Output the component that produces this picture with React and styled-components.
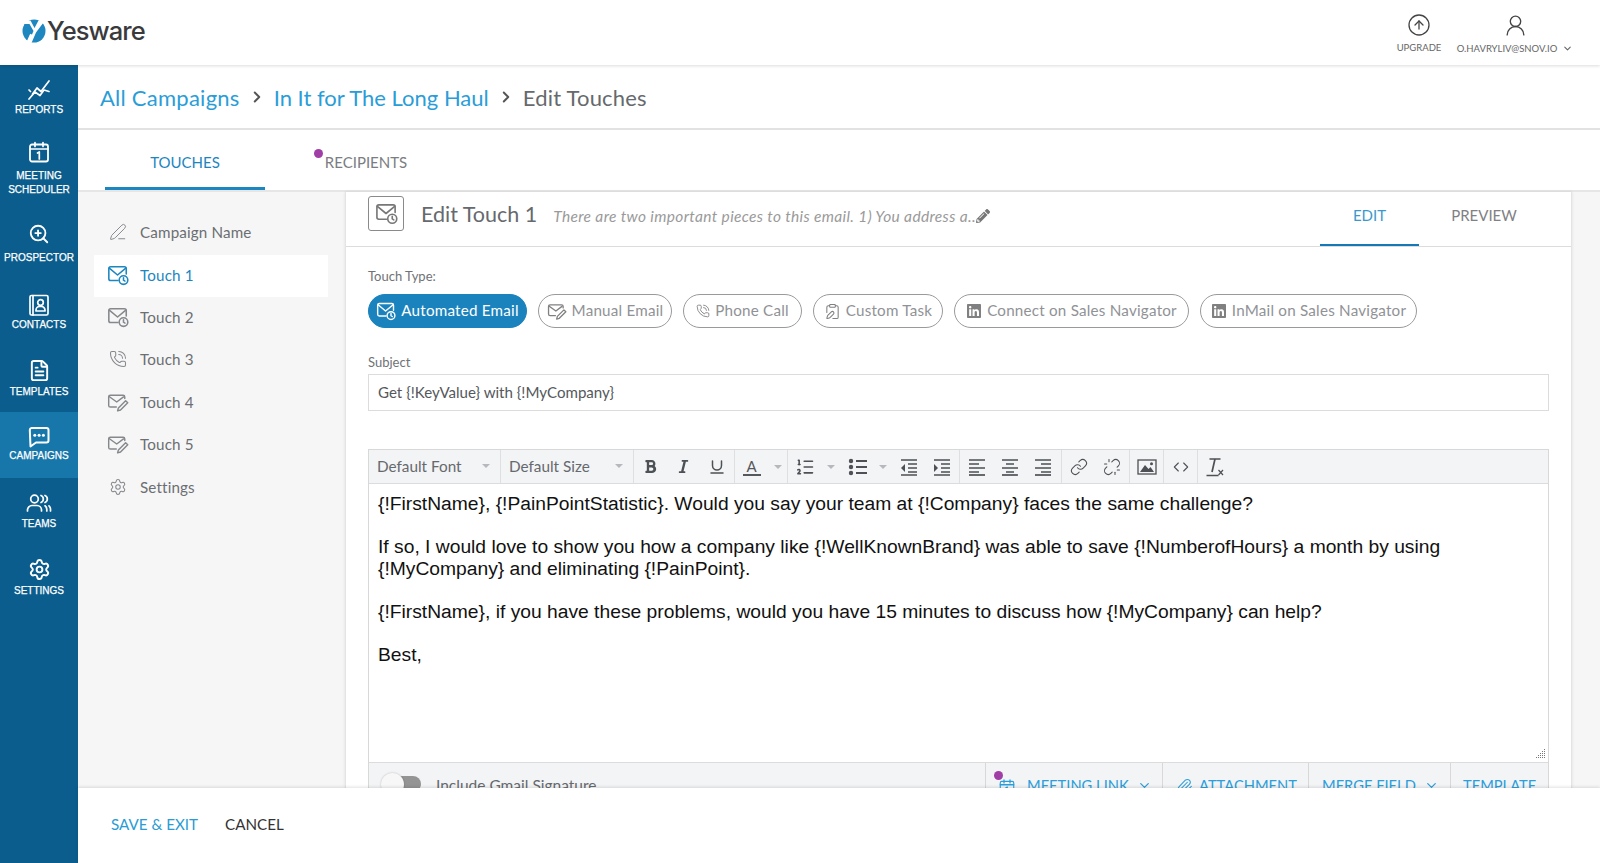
import React from "react"
import styled, { createGlobalStyle } from "styled-components"
import {
  ChevronRight,
  ChevronDown,
  CircleArrowUp,
  UserRound,
  ZoomIn,
  FileText,
  Settings,
  PenLine,
  PhoneCall,
  ClipboardPen,
  Underline,
  ListOrdered,
  Link,
  Unlink,
  Code,
  Paperclip,
} from "lucide-react"
import { FaLinkedin, FaPencilAlt, FaBold, FaItalic } from "react-icons/fa"

const GlobalStyle = createGlobalStyle`
  html, body { margin: 0; padding: 0; background: #fff; }
  * { box-sizing: border-box; }
  body { font-family: Lato, "Open Sans", sans-serif; color: #5f6368; }
`

const Page = styled.div`
  width: 100%;
  height: 100vh;
  display: flex;
  flex-direction: column;
  overflow: hidden;
`

const TopBar = styled.header`
  height: 65px;
  flex: none;
  display: flex;
  align-items: flex-start;
  justify-content: space-between;
  background: #fff;
  box-shadow: 0 1px 3px rgba(0, 0, 0, 0.14);
  position: relative;
  z-index: 3;
`

const Logo = styled.div`
  display: flex;
  align-items: center;
  gap: 1px;
  padding: 15px 0 0 22px;
`

const LogoWord = styled.span`
  font-family: Inter, sans-serif;
  font-size: 25.5px;
  font-weight: 500;
  letter-spacing: -0.9px;
  color: #3a3a3c;
`

const TopActions = styled.div`
  display: flex;
  gap: 6px;
  padding: 13px 25px 0 0;
`

const TopAction = styled.div`
  display: flex;
  flex-direction: column;
  align-items: center;
  width: ${(p) => p.$w}px;
  color: #444;
`

const TopLabel = styled.span`
  display: flex;
  align-items: center;
  gap: 5px;
  margin-top: 5px;
  font-size: 9.5px;
  color: #666;
  white-space: nowrap;
`

const Body = styled.div`
  flex: 1;
  min-height: 0;
  display: flex;
`

const Sidebar = styled.nav`
  width: 78px;
  flex: none;
  background: #0b5d8d;
`

const SideItem = styled.div`
  height: ${(p) => p.$h}px;
  padding-top: 13px;
  display: flex;
  flex-direction: column;
  align-items: center;
  background: ${(p) => (p.$active ? "#1776aa" : "transparent")};
  color: #fff;
`

const SideLabel = styled.span`
  margin-top: ${(p) => p.$gap ?? 5}px;
  font-family: "Liberation Sans", Arial, sans-serif;
  font-size: 10px;
  line-height: 14px;
  text-align: center;
  font-weight: 400;
  -webkit-text-stroke: 0.25px #fff;
  white-space: nowrap;
`

const Content = styled.div`
  flex: 1;
  min-width: 0;
  display: flex;
  flex-direction: column;
`

const Crumbs = styled.div`
  height: 65px;
  flex: none;
  display: flex;
  align-items: center;
  padding: 1px 0 0 22px;
  border-bottom: 2px solid #e2e2e2;
  font-size: 22px;
`

const Crumb = styled.span`
  letter-spacing: ${(p) => p.$spacing ?? 0}px;
  color: ${(p) => (p.$current ? "#66696d" : "#2a9dd8")};
`

const CrumbSep = styled(ChevronRight)`
  width: 18px;
  height: 18px;
  margin: 0 8px;
  color: #555;
  stroke-width: 2.6;
`

const Tabs = styled.div`
  height: 62px;
  flex: none;
  display: flex;
  padding-left: 27px;
  border-bottom: 2px solid #e6e6e6;
`

const Tab = styled.div`
  position: relative;
  width: ${(p) => p.$w}px;
  display: flex;
  align-items: center;
  justify-content: center;
  padding-top: 7px;
  font-size: 15px;
  color: ${(p) => (p.$active ? "#1c86c0" : "#7a7d81")};
  border-bottom: 3px solid ${(p) => (p.$active ? "#1c86c0" : "transparent")};
`

const Dot = styled.span`
  position: absolute;
  width: 9px;
  height: 9px;
  border-radius: 50%;
  background: #a03ea6;
  left: ${(p) => p.$x}px;
  top: ${(p) => p.$y}px;
`

const Workspace = styled.div`
  flex: 1;
  min-height: 0;
  display: flex;
  background: #f6f6f6;
`

const TouchNav = styled.div`
  width: 267px;
  flex: none;
  padding: 20.5px 0 0 16px;
`

const TouchItem = styled.div`
  width: 234px;
  height: 42.4px;
  display: flex;
  align-items: center;
  gap: 11px;
  padding: 0 0 3px 13px;
  font-size: 15.2px;
  letter-spacing: 0.15px;
  background: ${(p) => (p.$active ? "#fff" : "transparent")};
  color: ${(p) => (p.$active ? "#1c86c0" : "#6b6e72")};
`

const TouchIcon = styled.span`
  width: 22px;
  display: flex;
  justify-content: center;
  color: ${(p) => (p.$active ? "#1c86c0" : "#85888c")};
`

const Panel = styled.main`
  width: 1227px;
  flex: none;
  background: #fff;
  border-left: 1px solid #e4e4e4;
  border-right: 1px solid #e4e4e4;
  box-shadow: 0 0 3px rgba(0, 0, 0, 0.1);
  overflow: hidden;
`

const PanelHead = styled.div`
  height: 55px;
  display: flex;
  border-bottom: 1px solid #dcdcdc;
  padding: 0 22px;
`

const TouchBox = styled.div`
  width: 36px;
  height: 35px;
  margin-top: 4px;
  display: flex;
  align-items: center;
  justify-content: center;
  border: 1px solid #8a8a8a;
  border-radius: 3px;
  color: #777;
`

const TouchTitle = styled.h2`
  margin: 7px 0 0 17px;
  font-size: 21.5px;
  line-height: 30px;
  font-weight: 400;
  color: #66696d;
  white-space: nowrap;
`

const TouchNote = styled.div`
  display: flex;
  align-items: flex-start;
  margin: 14px 0 0 16px;
  font-size: 15.5px;
  letter-spacing: 0.35px;
  line-height: 20px;
  font-style: italic;
  color: #9a9a9a;
  white-space: nowrap;
  svg {
    margin-top: 3px;
    color: #777;
  }
`

const ViewTabs = styled.div`
  margin-left: auto;
  display: flex;
`

const ViewTab = styled.div`
  width: ${(p) => p.$w}px;
  display: flex;
  align-items: center;
  justify-content: center;
  padding-bottom: 7px;
  font-size: 15px;
  color: ${(p) => (p.$active ? "#3b98cc" : "#7f8185")};
  border-bottom: 2px solid ${(p) => (p.$active ? "#1579b8" : "transparent")};
`

const PanelBody = styled.div`
  padding: 21px 22px 0;
`

const FieldLabel = styled.div`
  font-size: 13px;
  line-height: 16px;
  color: #6f7276;
`

const Pills = styled.div`
  display: flex;
  gap: 11px;
  margin: 10px 0 26px;
`

const Pill = styled.div`
  height: 34px;
  width: ${(p) => p.$w}px;
  display: flex;
  align-items: center;
  justify-content: center;
  gap: 5px;
  padding-bottom: 2px;
  border-radius: 17px;
  font-size: 15.2px;
  letter-spacing: 0.22px;
  white-space: nowrap;
  color: ${(p) => (p.$active ? "#fff" : "#909296")};
  background: ${(p) => (p.$active ? "#1a82bd" : "#fff")};
  border: 1px solid ${(p) => (p.$active ? "#1a82bd" : "#9a9a9a")};
  svg {
    flex: none;
    margin-top: 2px;
    color: ${(p) => (p.$active ? "#fff" : "#808080")};
  }
`

const SubjectInput = styled.div`
  height: 37px;
  margin: 4px 0 38px;
  display: flex;
  align-items: center;
  padding: 0 0 2px 9px;
  border: 1px solid #dcdcdc;
  font-size: 15.1px;
  color: #55585c;
`

const Editor = styled.div`
  border: 1px solid #d8d8d8;
  border-bottom: 0;
`

const Toolbar = styled.div`
  height: 34px;
  display: flex;
  background: #f3f4f6;
  border-bottom: 1px solid #dcdcdc;
`

const ToolGroup = styled.div`
  width: ${(p) => p.$w}px;
  flex: ${(p) => (p.$w ? "none" : 1)};
  display: flex;
  align-items: center;
  border-right: ${(p) => (p.$last ? "none" : "1px solid #dedfe1")};
`

const ToolSelect = styled.div`
  flex: 1;
  display: flex;
  align-items: center;
  justify-content: space-between;
  padding: 0 10px 2px 8px;
  font-size: 15.3px;
  color: #66696d;
`

const Caret = styled.span`
  width: 0;
  height: 0;
  flex: none;
  border-left: 4px solid transparent;
  border-right: 4px solid transparent;
  border-top: 4px solid #b7b8bb;
`

const ToolCaretSlot = styled.span`
  width: ${(p) => p.$w ?? 20}px;
  display: flex;
  justify-content: center;
`

const ToolBtn = styled.span`
  width: ${(p) => p.$w ?? 33}px;
  flex: none;
  display: flex;
  justify-content: center;
  align-items: center;
  color: #4d5054;
`

const ColorA = styled.span`
  width: 18px;
  text-align: center;
  border-bottom: 2px solid #55585c;
  font-size: 15px;
  line-height: 16px;
  color: #55585c;
`

const EditorText = styled.div`
  height: 278px;
  position: relative;
  padding: 9px 9px 0;
  font-family: "Liberation Sans", Arial, sans-serif;
  font-size: 19.25px;
  line-height: 21.7px;
  color: #111;
  p {
    margin: 0 0 21.5px;
  }
`

const Resizer = styled.svg`
  position: absolute;
  right: 2px;
  bottom: 2px;
`

const EditorFoot = styled.div`
  height: 40px;
  display: flex;
  background: #f3f4f6;
  border-top: 1px solid #dcdcdc;
`

const SigToggle = styled.div`
  flex: 1;
  display: flex;
  align-items: flex-start;
  gap: 15px;
  padding: 10px 0 0 12px;
  font-size: 15.5px;
  line-height: 25px;
  color: #66696d;
`

const Switch = styled.div`
  position: relative;
  width: 40px;
  height: 16px;
  margin-top: 3px;
  &::before {
    content: "";
    position: absolute;
    left: 12px;
    right: 0;
    top: 0;
    bottom: 0;
    border-radius: 8px;
    background: #949494;
  }
  &::after {
    content: "";
    position: absolute;
    left: 0;
    top: -3px;
    width: 23px;
    height: 23px;
    border-radius: 50%;
    background: #f7f7f7;
    box-shadow: 0 0 2px rgba(0, 0, 0, 0.25);
  }
`

const FootAction = styled.div`
  position: relative;
  width: ${(p) => p.$w}px;
  flex: none;
  display: flex;
  align-items: flex-start;
  gap: ${(p) => p.$gap ?? 8}px;
  padding: 10px 0 0 ${(p) => p.$pad}px;
  font-size: 14.7px;
  line-height: 25px;
  color: #2a9fdc;
  border-left: 1px solid #d8d8d8;
  white-space: nowrap;
  svg {
    flex: none;
    margin-top: 5px;
  }
  svg:first-of-type {
    margin-right: 3px;
  }
`

const BottomBar = styled.footer`
  height: 75px;
  flex: none;
  display: flex;
  align-items: center;
  gap: 27px;
  padding: 0 0 4px 33px;
  background: #fff;
  box-shadow: 0 -1px 3px rgba(0, 0, 0, 0.12);
  position: relative;
  font-size: 15.2px;
`

const BottomLink = styled.span`
  color: ${(p) => (p.$primary ? "#2a9bd4" : "#333")};
`

const line = {
  fill: "none",
  stroke: "currentColor",
  strokeWidth: 1.7,
  strokeLinecap: "round",
  strokeLinejoin: "round",
}

const MailClock = ({ size = 22 }) => (
  <svg width={size} height={size} viewBox="0 0 24 24" {...line}>
    <path d="M12 18H4a2 2 0 0 1-2-2V5a2 2 0 0 1 2-2h15a2 2 0 0 1 2 2v6" />
    <path d="M2.5 4.5 11.5 12l9-7.5" />
    <circle cx="18" cy="17.5" r="4.7" />
    <path d="M18 15v2.6l1.6 1" />
  </svg>
)

const MailPencil = ({ size = 22 }) => (
  <svg width={size} height={size} viewBox="0 0 26 24" {...line}>
    <path d="M11 18H4a2 2 0 0 1-2-2V6a2 2 0 0 1 2-2h15a2 2 0 0 1 2 2v2" />
    <path d="M2.5 5.5 11.5 12l8-6" />
    <path d="M22 10.5l2.5 2.5-8.5 8.5-3.5 1 1-3.5z" />
  </svg>
)

const ChartIcon = () => (
  <svg width="24" height="24" viewBox="0 0 24 24" {...line}>
    <path d="M2 12l1.5 1.5M5.5 16l4.5-6 4 3.5L22 3" />
    <path d="M2 21l6-7 5 3.5 4-5.500 5 1.5" />
  </svg>
)

const CalendarIcon = ({ size = 24, stroke }) => (
  <svg width={size} height={size} viewBox="0 0 24 24" {...line}>
    <rect x="3" y="4.5" width="18" height="17" rx="2" strokeWidth={stroke ?? 1.8} />
    <path d="M3 9h18M8 2.5v4M16 2.5v4" />
    <path d="M10.5 13l1.8-1v7" />
  </svg>
)

const ContactIcon = () => (
  <svg width="24" height="24" viewBox="0 0 24 24" {...line}>
    <rect x="3" y="2.5" width="18" height="19.5" rx="1.5" />
    <path d="M6 2.5V22" />
    <circle cx="13.5" cy="9.5" r="2.8" />
    <path d="M9 18v-1a3.5 3.5 0 0 1 3.5-3.5h2A3.5 3.5 0 0 1 18 17v1z" />
  </svg>
)

const TeamIcon = () => (
  <svg width="26" height="24" viewBox="0 0 26 24" {...line}>
    <circle cx="8.5" cy="8" r="3.8" />
    <path d="M1.5 20v-1a4.5 4.5 0 0 1 4.5-4.5h5a4.5 4.5 0 0 1 4.5 4.5v1" />
    <path d="M15 4.5a3.8 3.8 0 0 1 0 7M19 4.5a3.8 3.8 0 0 1 0 7" />
    <path d="M19 14.8a4.5 4.5 0 0 1 1.8 3.7V20M23 14.8a4.5 4.5 0 0 1 1.5 3.7V20" />
  </svg>
)

const BubbleIcon = () => (
  <svg width="24" height="24" viewBox="0 0 24 24">
    <path
      d="M4.5 3h15A2 2 0 0 1 21.5 5v10.5a2 2 0 0 1-2 2H9L3.5 21.5 2.8 5A2 2 0 0 1 4.5 3z"
      fill="none"
      stroke="currentColor"
      strokeWidth="2"
      strokeLinejoin="round"
    />
    <circle cx="7.8" cy="10.3" r="1.5" fill="currentColor" />
    <circle cx="12.1" cy="10.3" r="1.5" fill="currentColor" />
    <circle cx="16.4" cy="10.3" r="1.5" fill="currentColor" />
  </svg>
)

const LogoMark = () => (
  <svg width="24" height="24" viewBox="0 0 24 24">
    <circle cx="12" cy="12" r="11.5" fill="#1f87bf" />
    <path d="M1 1.5h7.5L12.5 9l4-7.5H23L14 13.5 9.5 24H4l4.5-10z" fill="#fff" />
    <path d="M2.5 5h5l4 7-1.5 3.5C6 14.5 2.5 10 2.5 5z" fill="#1f87bf" />
  </svg>
)

const AlignIcon = ({ mode }) => {
  const short = { left: "M2 7h10M2 15h10", center: "M6 7h8M6 15h8", right: "M8 7h10M8 15h10" }
  return (
    <svg width="20" height="20" viewBox="0 0 20 20" fill="none" stroke="currentColor" strokeWidth="1.7">
      <path d="M2 3h16M2 11h16" />
      <path d={short[mode]} />
      <path d="M2 18h16" />
    </svg>
  )
}

const IndentIcon = ({ flip }) => (
  <svg width="20" height="20" viewBox="0 0 20 20" fill="none" stroke="currentColor" strokeWidth="1.7">
    <path d="M2 3h16M9 7h9M9 11h9M9 15h9M2 18h16" />
    <path d={flip ? "M6 7v8L2 11z" : "M2 7v8l4-4z"} fill="currentColor" stroke="none" />
  </svg>
)

const BulletIcon = () => (
  <svg width="20" height="20" viewBox="0 0 20 20" fill="currentColor">
    <circle cx="3" cy="4" r="2.2" />
    <circle cx="3" cy="10" r="2.2" />
    <circle cx="3" cy="16" r="2.2" />
    <path d="M8 3h11v2H8zM8 9h11v2H8zM8 15h11v2H8z" />
  </svg>
)

const ImageIcon = () => (
  <svg width="20" height="18" viewBox="0 0 20 18">
    <rect x="1" y="2" width="18" height="14" fill="none" stroke="currentColor" strokeWidth="1.3" />
    <path d="M3 14l5-7 3.5 4 2-2 3.5 5z" fill="currentColor" />
    <circle cx="14.5" cy="5.8" r="1.5" fill="currentColor" />
  </svg>
)

const ClearIcon = () => (
  <svg width="20" height="22" viewBox="0 0 20 22" fill="none" stroke="currentColor" strokeWidth="1.5">
    <path d="M4.5 3h11M10 3 7 16M1.5 19.5h12" strokeWidth="1.7" />
    <path d="M13.5 14l4.5 5M18 14l-4.5 5" strokeWidth="1.2" />
  </svg>
)

const sideItems = [
  { label: "REPORTS", icon: <ChartIcon />, h: 62, gap: 1 },
  { label: "MEETING\nSCHEDULER", icon: <CalendarIcon />, h: 83, gap: 5 },
  { label: "PROSPECTOR", icon: <ZoomIn size={22} />, h: 70, gap: 6 },
  { label: "CONTACTS", icon: <ContactIcon />, h: 66, gap: 1 },
  { label: "TEMPLATES", icon: <FileText size={23} />, h: 66, gap: 3 },
  { label: "CAMPAIGNS", icon: <BubbleIcon />, h: 66, gap: 0, active: true },
  { label: "TEAMS", icon: <TeamIcon />, h: 67, gap: 2 },
  { label: "SETTINGS", icon: <Settings size={23} />, h: 66, gap: 3 },
]

const touchItems = [
  { label: "Campaign Name", icon: <PenLine size={18} strokeWidth={1.3} /> },
  { label: "Touch 1", icon: <MailClock />, active: true },
  { label: "Touch 2", icon: <MailClock /> },
  { label: "Touch 3", icon: <PhoneCall size={18} strokeWidth={1.4} /> },
  { label: "Touch 4", icon: <MailPencil /> },
  { label: "Touch 5", icon: <MailPencil /> },
  { label: "Settings", icon: <Settings size={18} strokeWidth={1.4} /> },
]

const touchTypes = [
  { label: "Automated Email", w: 159, icon: <MailClock size={20} />, active: true },
  { label: "Manual Email", w: 134, icon: <MailPencil size={20} /> },
  { label: "Phone Call", w: 119, icon: <PhoneCall size={14} strokeWidth={1.5} /> },
  { label: "Custom Task", w: 130, icon: <ClipboardPen size={17} strokeWidth={1.5} /> },
  { label: "Connect on Sales Navigator", w: 235, icon: <FaLinkedin size={16} /> },
  { label: "InMail on Sales Navigator", w: 217, icon: <FaLinkedin size={16} /> },
]

export default function App() {
  return (
    <Page>
      <GlobalStyle />
      <TopBar>
        <Logo>
          <LogoMark />
          <LogoWord>Yesware</LogoWord>
        </Logo>
        <TopActions>
          <TopAction $w={60}>
            <CircleArrowUp size={24} strokeWidth={1.3} />
            <TopLabel>UPGRADE</TopLabel>
          </TopAction>
          <TopAction $w={120}>
            <UserRound size={25} strokeWidth={1.3} />
            <TopLabel>
              O.HAVRYLIV@SNOV.IO
              <ChevronDown size={11} strokeWidth={2.4} />
            </TopLabel>
          </TopAction>
        </TopActions>
      </TopBar>
      <Body>
        <Sidebar>
          {sideItems.map((item) => (
            <SideItem key={item.label} $h={item.h} $active={item.active}>
              {item.icon}
              <SideLabel $gap={item.gap}>
                {item.label.split("\n").map((part) => (
                  <div key={part}>{part}</div>
                ))}
              </SideLabel>
            </SideItem>
          ))}
        </Sidebar>
        <Content>
          <Crumbs>
            <Crumb $spacing={0.25}>All Campaigns</Crumb>
            <CrumbSep />
            <Crumb>In It for The Long Haul</Crumb>
            <CrumbSep />
            <Crumb $current $spacing={0.2}>Edit Touches</Crumb>
          </Crumbs>
          <Tabs>
            <Tab $active $w={160}>TOUCHES</Tab>
            <Tab $w={202}>
              <Dot $x={49} $y={19} />
              RECIPIENTS
            </Tab>
          </Tabs>
          <Workspace>
            <TouchNav>
              {touchItems.map((item) => (
                <TouchItem key={item.label} $active={item.active}>
                  <TouchIcon $active={item.active}>{item.icon}</TouchIcon>
                  {item.label}
                </TouchItem>
              ))}
            </TouchNav>
            <Panel>
              <PanelHead>
                <TouchBox>
                  <MailClock size={23} />
                </TouchBox>
                <TouchTitle>Edit Touch 1</TouchTitle>
                <TouchNote>
                  There are two important pieces to this email. 1) You address a..
                  <FaPencilAlt size={14} />
                </TouchNote>
                <ViewTabs>
                  <ViewTab $active $w={99}>EDIT</ViewTab>
                  <ViewTab $w={130}>PREVIEW</ViewTab>
                </ViewTabs>
              </PanelHead>
              <PanelBody>
                <FieldLabel>Touch Type:</FieldLabel>
                <Pills>
                  {touchTypes.map((type) => (
                    <Pill key={type.label} $w={type.w} $active={type.active}>
                      {type.icon}
                      {type.label}
                    </Pill>
                  ))}
                </Pills>
                <FieldLabel>Subject</FieldLabel>
                <SubjectInput>Get {"{!KeyValue}"} with {"{!MyCompany}"}</SubjectInput>
                <Editor>
                  <Toolbar>
                    <ToolGroup $w={132}>
                      <ToolSelect>Default Font <Caret /></ToolSelect>
                    </ToolGroup>
                    <ToolGroup $w={133}>
                      <ToolSelect>Default Size <Caret /></ToolSelect>
                    </ToolGroup>
                    <ToolGroup $w={101}>
                      <ToolBtn><FaBold size={15} /></ToolBtn>
                      <ToolBtn><FaItalic size={15} /></ToolBtn>
                      <ToolBtn><Underline size={18} strokeWidth={2} /></ToolBtn>
                    </ToolGroup>
                    <ToolGroup $w={53}>
                      <ToolBtn><ColorA>A</ColorA></ToolBtn>
                      <ToolCaretSlot><Caret /></ToolCaretSlot>
                    </ToolGroup>
                    <ToolGroup $w={172}>
                      <ToolBtn><ListOrdered size={20} strokeWidth={1.9} /></ToolBtn>
                      <ToolCaretSlot><Caret /></ToolCaretSlot>
                      <ToolBtn><BulletIcon /></ToolBtn>
                      <ToolCaretSlot $w={18}><Caret /></ToolCaretSlot>
                      <ToolBtn><IndentIcon flip /></ToolBtn>
                      <ToolBtn><IndentIcon /></ToolBtn>
                    </ToolGroup>
                    <ToolGroup $w={102}>
                      <ToolBtn><AlignIcon mode="left" /></ToolBtn>
                      <ToolBtn><AlignIcon mode="center" /></ToolBtn>
                      <ToolBtn><AlignIcon mode="right" /></ToolBtn>
                    </ToolGroup>
                    <ToolGroup $w={68}>
                      <ToolBtn><Link size={18} strokeWidth={1.4} /></ToolBtn>
                      <ToolBtn><Unlink size={18} strokeWidth={1.4} /></ToolBtn>
                    </ToolGroup>
                    <ToolGroup $w={34}>
                      <ToolBtn><ImageIcon /></ToolBtn>
                    </ToolGroup>
                    <ToolGroup $w={34}>
                      <ToolBtn><Code size={16} strokeWidth={1.6} /></ToolBtn>
                    </ToolGroup>
                    <ToolGroup $last>
                      <ToolBtn><ClearIcon /></ToolBtn>
                    </ToolGroup>
                  </Toolbar>
                  <EditorText>
                    <p>{"{!FirstName}, {!PainPointStatistic}. Would you say your team at {!Company} faces the same challenge?"}</p>
                    <p>{"If so, I would love to show you how a company like {!WellKnownBrand} was able to save {!NumberofHours} a month by using {!MyCompany} and eliminating {!PainPoint}."}</p>
                    <p>{"{!FirstName}, if you have these problems, would you have 15 minutes to discuss how {!MyCompany} can help?"}</p>
                    <p>Best,</p>
                    <Resizer width="12" height="12" viewBox="0 0 12 12" fill="#777">
                      <path d="M10 1h1v1h-1zM8 3h1v1H8zM10 3h1v1h-1zM6 5h1v1H6zM8 5h1v1H8zM10 5h1v1h-1zM4 7h1v1H4zM6 7h1v1H6zM8 7h1v1H8zM10 7h1v1h-1zM2 9h1v1H2zM4 9h1v1H4zM6 9h1v1H6zM8 9h1v1H8zM10 9h1v1h-1z" />
                    </Resizer>
                  </EditorText>
                  <EditorFoot>
                    <SigToggle>
                      <Switch />
                      Include Gmail Signature
                    </SigToggle>
                    <FootAction $w={177} $pad={12} $gap={8}>
                      <Dot $x={8} $y={8} />
                      <CalendarIcon size={18} stroke={1.5} />
                      MEETING LINK
                      <ChevronDown size={15} strokeWidth={2} />
                    </FootAction>
                    <FootAction $w={146} $pad={13} $gap={3}>
                      <Paperclip size={17} strokeWidth={1.5} />
                      ATTACHMENT
                    </FootAction>
                    <FootAction $w={142} $pad={13} $gap={8}>
                      MERGE FIELD
                      <ChevronDown size={15} strokeWidth={2} />
                    </FootAction>
                    <FootAction $w={98} $pad={12}>TEMPLATE</FootAction>
                  </EditorFoot>
                </Editor>
              </PanelBody>
            </Panel>
          </Workspace>
          <BottomBar>
            <BottomLink $primary>SAVE &amp; EXIT</BottomLink>
            <BottomLink>CANCEL</BottomLink>
          </BottomBar>
        </Content>
      </Body>
    </Page>
  )
}
